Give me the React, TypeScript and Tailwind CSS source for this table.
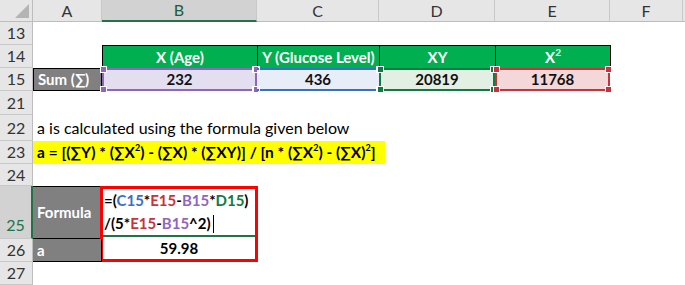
import type { ReactNode } from 'react'

// column widths: row header, A, B, C, D, E, F, remainder
const cols = 'grid-cols-[33px_69px_155px_122px_116px_115px_73px_2px]'
const rows = 'grid-rows-[22px_23px_23px_23px_24px_26px_23px_22px_53px_23px_23px]'

const font = { fontFamily: 'Lato, "Open Sans", sans-serif' }

function ColHead({ label, active }: { label: string; active?: boolean }) {
  return (
    <div
      className={`flex items-center justify-center border-r border-[#c8c8c8] text-[16px] ${
        active ? 'bg-[#d2d2d2] border-b-2 border-b-[#217346] text-[#1e5c3a]' : 'bg-[#e6e6e6] border-b border-b-[#bdbdbd] text-[#333]'
      }`}
    >
      {label}
    </div>
  )
}

function RowHead({ label, active }: { label: string; active?: boolean }) {
  return (
    <div
      className={`col-start-1 flex justify-center border-b border-[#c8c8c8] text-[16px] ${
        active
          ? 'bg-[#d2d2d2] items-end pb-[1px] text-[#217346] border-r-2 border-r-[#217346]'
          : 'bg-[#e6e6e6] items-center text-[#333] border-r border-r-[#bdbdbd]'
      }`}
    >
      {label}
    </div>
  )
}

function Corner({ color, className }: { color: string; className: string }) {
  return <span className={`absolute w-[7px] h-[7px] border border-white ${color} ${className}`} />
}

// a highlighted range cell with its four handles
function RangeCell({ children, fill, edge, handle }: { children: ReactNode; fill: string; edge: string; handle: string }) {
  return (
    <div className={`relative flex items-center justify-center font-bold text-[15px] text-[#111] border-2 ${fill} ${edge}`}>
      {children}
      <Corner color={handle} className="-left-[4px] -top-[4px]" />
      <Corner color={handle} className="-right-[4px] -top-[4px]" />
      <Corner color={handle} className="-left-[4px] -bottom-[4px]" />
      <Corner color={handle} className="-right-[4px] -bottom-[4px]" />
    </div>
  )
}

function HeadCell({ children }: { children: ReactNode }) {
  return (
    <div className="flex items-center justify-center bg-[#00b050] border-t border-r border-black text-white font-bold text-[15px]">
      {children}
    </div>
  )
}

const C = ({ c, t }: { c: string; t: string }) => <span className={c}>{t}</span>

export default function App() {
  return (
    <div className="w-[685px] h-[285px] overflow-hidden bg-white text-black" style={font}>
      <div className={`grid ${cols} ${rows}`}>
        {/* header row */}
        <div className="relative bg-[#e6e6e6] border-r border-b border-[#bdbdbd]">
          <div className="absolute right-[3px] bottom-[3px] w-0 h-0 border-l-[14px] border-l-transparent border-b-[14px] border-b-[#b4b4b4]" />
        </div>
        <ColHead label="A" />
        <ColHead label="B" active />
        <ColHead label="C" />
        <ColHead label="D" />
        <ColHead label="E" />
        <ColHead label="F" />
        <div className="bg-[#e6e6e6] border-b border-[#bdbdbd]" />

        {/* 13 */}
        <RowHead label="13" />
        <div className="col-span-7" />

        {/* 14 */}
        <RowHead label="14" />
        <div />
        <div className="col-span-4 grid grid-cols-[155px_122px_116px_115px] border-l border-black">
          <HeadCell>X (Age)</HeadCell>
          <HeadCell>
            <span className="whitespace-nowrap">Y (Glucose Level)</span>
          </HeadCell>
          <HeadCell>XY</HeadCell>
          <HeadCell>
            X<sup className="text-[10px] -top-[5px]">2</sup>
          </HeadCell>
        </div>
        <div className="col-span-2" />

        {/* 15 */}
        <RowHead label="15" />
        <div className="flex items-center pl-[4px] bg-[#808080] border border-black text-white font-bold text-[15px]">Sum (∑)</div>
        <RangeCell fill="bg-[#e4dff0]" edge="border-[#8e65c1]" handle="bg-[#8e65c1]">232</RangeCell>
        <RangeCell fill="bg-[#e8eef8]" edge="border-[#3a6fc6] border-l-0 border-r-0" handle="bg-transparent border-transparent">436</RangeCell>
        <RangeCell fill="bg-[#e2f0e4]" edge="border-[#107c41]" handle="bg-[#107c41]">20819</RangeCell>
        <RangeCell fill="bg-[#f4d7d8]" edge="border-[#c8323a]" handle="bg-[#c8323a]">11768</RangeCell>
        <div className="col-span-2" />

        {/* 21 */}
        <RowHead label="21" />
        <div className="col-span-7" />

        {/* 22 */}
        <RowHead label="22" />
        <div className="col-span-7 flex items-center pl-[4px] text-[16px] whitespace-nowrap">a is calculated using the formula given below</div>

        {/* 23 */}
        <RowHead label="23" />
        <div className="col-span-7 flex items-center">
          <div className="w-[352px] h-full flex items-center pl-[4px] bg-[#ffff00] font-bold text-[15.5px] whitespace-nowrap">
            a = [(∑Y) * (∑X<sup className="text-[9px] -top-[5px]">2</sup>) - (∑X) * (∑XY)] / [n * (∑X<sup className="text-[9px] -top-[5px]">2</sup>) - (∑X)<sup className="text-[9px] -top-[5px]">2</sup>]
          </div>
        </div>

        {/* 24 */}
        <RowHead label="24" />
        <div className="col-span-7" />

        {/* 25 + 26 */}
        <RowHead label="25" active />
        <div className="flex items-center pl-[4px] bg-[#808080] border-t border-b border-r border-black text-white font-bold text-[15px]">Formula</div>
        <div className="row-span-2 -ml-[2px] -mr-[1px] flex flex-col border-[3px] border-[#ff0000]">
          <div className="h-[50px] flex flex-col justify-center pl-[1px] border-b-[2px] border-[#217346] font-bold text-[15px] leading-[23px] whitespace-nowrap">
            <div>
              <C c="" t="=(" />
              <C c="text-[#3a6fc6]" t="C15" />
              <C c="" t="*" />
              <C c="text-[#c8323a]" t="E15" />
              <C c="" t="-" />
              <C c="text-[#8e65c1]" t="B15" />
              <C c="" t="*" />
              <C c="text-[#107c41]" t="D15" />
              <C c="" t=")" />
            </div>
            <div className="flex items-center">
              <C c="" t="/(5*" />
              <C c="text-[#c8323a]" t="E15" />
              <C c="" t="-" />
              <C c="text-[#8e65c1]" t="B15" />
              <C c="" t="^2)" />
              <span className="ml-[2px] w-px h-[18px] bg-black" />
            </div>
          </div>
          <div className="flex-1 flex items-center justify-center font-bold text-[15px]">59.98</div>
        </div>
        <div className="col-span-5" />

        <RowHead label="26" />
        <div className="flex items-center pl-[4px] bg-[#808080] border-b border-r border-black text-white font-bold text-[15px]">a</div>
        <div className="col-span-5" />

        {/* 27 */}
        <RowHead label="27" />
        <div className="col-span-7" />
      </div>
    </div>
  )
}
